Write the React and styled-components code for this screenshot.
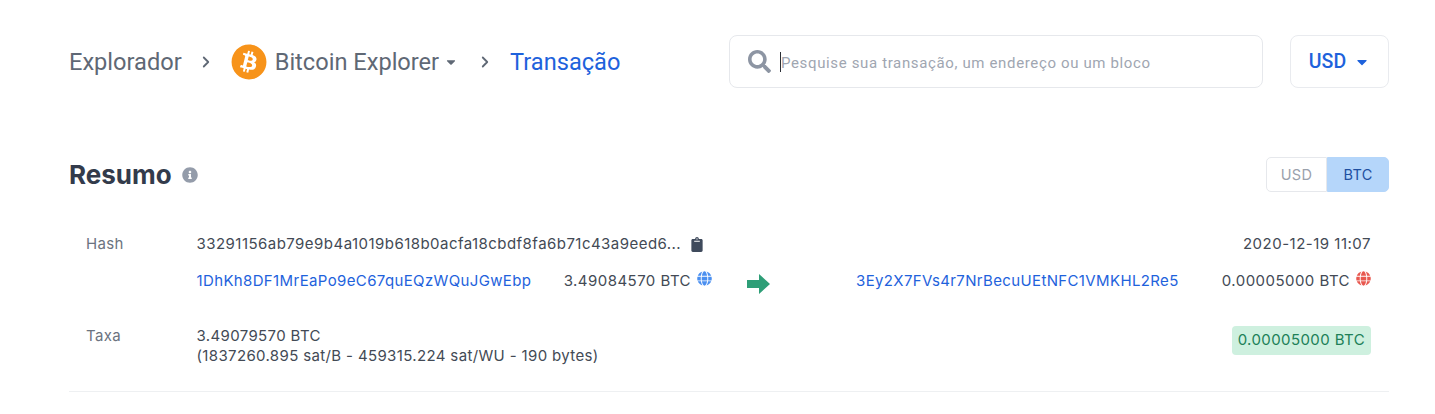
import React from "react";
import styled, { createGlobalStyle } from "styled-components";
import { FaBitcoin, FaCaretDown, FaClipboard, FaGlobe, FaInfoCircle, FaSearch } from "react-icons/fa";
import { FiChevronRight } from "react-icons/fi";

const GlobalStyle = createGlobalStyle`
    html, body {
        margin: 0;
        background: #fff;
    }
    body {
        font-family: "Inter", "Liberation Sans", sans-serif;
        color: #434a55;
    }
`;

const Page = styled.div`
    width: 1435px;
    height: 414px;
    box-sizing: border-box;
    padding: 35px 46px 0 69px;
    overflow: hidden;
`;

const Header = styled.header`
    display: flex;
    align-items: center;
    height: 53px;
    margin-bottom: 69px;
`;

const Breadcrumb = styled.nav`
    display: flex;
    align-items: center;
    width: 660px;
    font-family: "Roboto", sans-serif;
    font-size: 23.6px;
    color: #5f6875;
`;

const Crumb = styled.span`
    margin-left: ${(p) => (p.$active ? "5px" : "0")};
    color: ${(p) => (p.$active ? "#1e62dc" : "#5f6875")};
`;

const Separator = styled(FiChevronRight)`
    width: 18px;
    height: 18px;
    margin: 0 11px 0 15px;
    color: #5f6875;
    stroke-width: 2.4;
`;

const CoinMark = styled.span`
    display: flex;
    width: 36px;
    height: 36px;
    margin: 0 8px 0 5px;
    border-radius: 50%;
    background: #fff;
    color: #f7931a;
    font-size: 36px;
`;

const Caret = styled(FaCaretDown)`
    width: 14px;
    height: 14px;
    margin: 0 3px 0 5px;
    color: #5f6875;
`;

const SearchBox = styled.div`
    display: flex;
    align-items: center;
    box-sizing: border-box;
    width: 534px;
    height: 53px;
    margin-right: 27px;
    padding: 2px 0 0 18px;
    border: 1px solid #e6e8ec;
    border-radius: 8px;
    font-family: "Roboto", sans-serif;
    font-size: 15px;
    letter-spacing: 0.64px;
    color: #a0a6b1;
`;

const SearchIcon = styled(FaSearch)`
    width: 23px;
    height: 23px;
    margin: -2px 9px 0 0;
    color: #8d95a3;
`;

const Cursor = styled.span`
    width: 1px;
    height: 20px;
    margin-top: -2px;
    background: #2b2f36;
`;

const CurrencyButton = styled.div`
    display: flex;
    align-items: center;
    justify-content: center;
    gap: 8px;
    box-sizing: border-box;
    width: 99px;
    height: 53px;
    border: 1px solid #e9ebef;
    border-radius: 8px;
    font-family: "Roboto", sans-serif;
    font-size: 19.5px;
    font-weight: 500;
    color: #1e62dc;
`;

const BlueCaret = styled(FaCaretDown)`
    width: 16px;
    height: 16px;
`;

const SummaryHead = styled.div`
    display: flex;
    align-items: center;
    justify-content: space-between;
    height: 35px;
    margin-bottom: 34px;
`;

const TitleGroup = styled.div`
    display: flex;
    align-items: center;
    gap: 10px;
`;

const Title = styled.h2`
    margin: 0;
    font-size: 26px;
    font-weight: 700;
    color: #333b4b;
`;

const InfoIcon = styled(FaInfoCircle)`
    width: 16px;
    height: 16px;
    color: #949caa;
`;

const Toggle = styled.div`
    display: flex;
    height: 35px;
`;

const ToggleOption = styled.div`
    display: flex;
    align-items: center;
    justify-content: center;
    box-sizing: border-box;
    width: ${(p) => (p.$active ? "62px" : "61px")};
    border: 1px solid ${(p) => (p.$active ? "#b5d6fa" : "#e6e8ec")};
    border-radius: ${(p) => (p.$active ? "0 5px 5px 0" : "5px 0 0 5px")};
    background: ${(p) => (p.$active ? "#b5d6fa" : "#fff")};
    color: ${(p) => (p.$active ? "#1e4fa0" : "#9aa1ac")};
    font-size: 14.5px;
    letter-spacing: 0.3px;
`;

const Section = styled.section`
    padding: 8px 18px 25px 17px;
    border-bottom: 1px solid #eef0f2;
    font-size: 15px;
    letter-spacing: 0.36px;
    line-height: 20px;
`;

const Row = styled.div`
    display: flex;
    align-items: ${(p) => (p.$center ? "center" : "flex-start")};
    min-height: ${(p) => p.$height || "20px"};
    margin-bottom: ${(p) => p.$gap || "0"};
`;

const Label = styled.div`
    flex: 0 0 110.5px;
    color: #6b7380;
`;

const Value = styled.div`
    flex: 1;
    color: #434a55;
`;

const HashText = styled.span`
    display: inline-flex;
    align-items: center;
    gap: 10px;
    letter-spacing: 0.46px;
`;

const ClipIcon = styled(FaClipboard)`
    width: 12px;
    height: 15px;
    color: #3f4a5c;
`;

const Date = styled.div`
    color: #434a55;
    letter-spacing: 0.5px;
`;

const Link = styled.a`
    color: #1e62dc;
    text-decoration: none;
`;

const Inputs = styled.div`
    display: flex;
    align-items: center;
    justify-content: space-between;
    width: 515.5px;
    margin-left: 110.5px;
`;

const Amount = styled.span`
    display: inline-flex;
    align-items: flex-start;
    gap: 6px;
    color: #434a55;
    letter-spacing: 0.46px;
`;

const Globe = styled(FaGlobe)`
    width: 15px;
    height: 15px;
    color: ${(p) => p.$color};
`;

const ArrowCell = styled.div`
    display: flex;
    flex: 0 0 144px;
    padding: 6px 0 0 35px;
    box-sizing: border-box;
    color: #2e9e77;
`;

const Outputs = styled.div`
    display: flex;
    flex: 1;
    align-items: center;
    justify-content: space-between;
`;

const FeeBadge = styled.span`
    padding: 4px 6px 5px;
    border-radius: 4px;
    background: #cef0df;
    color: #208058;
    letter-spacing: 0.4px;
`;

const App = () => {
    return (
        <Page>
            <GlobalStyle />
            <Header>
                <Breadcrumb>
                    <Crumb>Explorador</Crumb>
                    <Separator />
                    <CoinMark>
                        <FaBitcoin />
                    </CoinMark>
                    <Crumb>Bitcoin Explorer</Crumb>
                    <Caret />
                    <Separator />
                    <Crumb $active>Transação</Crumb>
                </Breadcrumb>
                <SearchBox>
                    <SearchIcon />
                    <Cursor />
                    Pesquise sua transação, um endereço ou um bloco
                </SearchBox>
                <CurrencyButton>
                    USD
                    <BlueCaret />
                </CurrencyButton>
            </Header>
            <SummaryHead>
                <TitleGroup>
                    <Title>Resumo</Title>
                    <InfoIcon />
                </TitleGroup>
                <Toggle>
                    <ToggleOption>USD</ToggleOption>
                    <ToggleOption $active>BTC</ToggleOption>
                </Toggle>
            </SummaryHead>
            <Section>
                <Row $gap="14px">
                    <Label>Hash</Label>
                    <Value>
                        <HashText>
                            33291156ab79e9b4a1019b618b0acfa18cbdf8fa6b71c43a9eed6...
                            <ClipIcon />
                        </HashText>
                    </Value>
                    <Date>2020-12-19 11:07</Date>
                </Row>
                <Row $center $gap="32px">
                    <Inputs>
                        <Link>1DhKh8DF1MrEaPo9eC67quEQzWQuJGwEbp</Link>
                        <Amount>
                            3.49084570 BTC
                            <Globe $color="#4a8ff0" />
                        </Amount>
                    </Inputs>
                    <ArrowCell>
                        <svg width="24" height="20" viewBox="0 0 24 20">
                            <path d="M0 6h12V0l11 10-11 10v-6H0z" fill="currentColor" />
                        </svg>
                    </ArrowCell>
                    <Outputs>
                        <Link>3Ey2X7FVs4r7NrBecuUEtNFC1VMKHL2Re5</Link>
                        <Amount>
                            0.00005000 BTC
                            <Globe $color="#e8584f" />
                        </Amount>
                    </Outputs>
                </Row>
                <Row>
                    <Label>Taxa</Label>
                    <Value>
                        3.49079570 BTC
                        <br />
                        (1837260.895 sat/B - 459315.224 sat/WU - 190 bytes)
                    </Value>
                    <FeeBadge>0.00005000 BTC</FeeBadge>
                </Row>
            </Section>
        </Page>
    );
};

export default App;
